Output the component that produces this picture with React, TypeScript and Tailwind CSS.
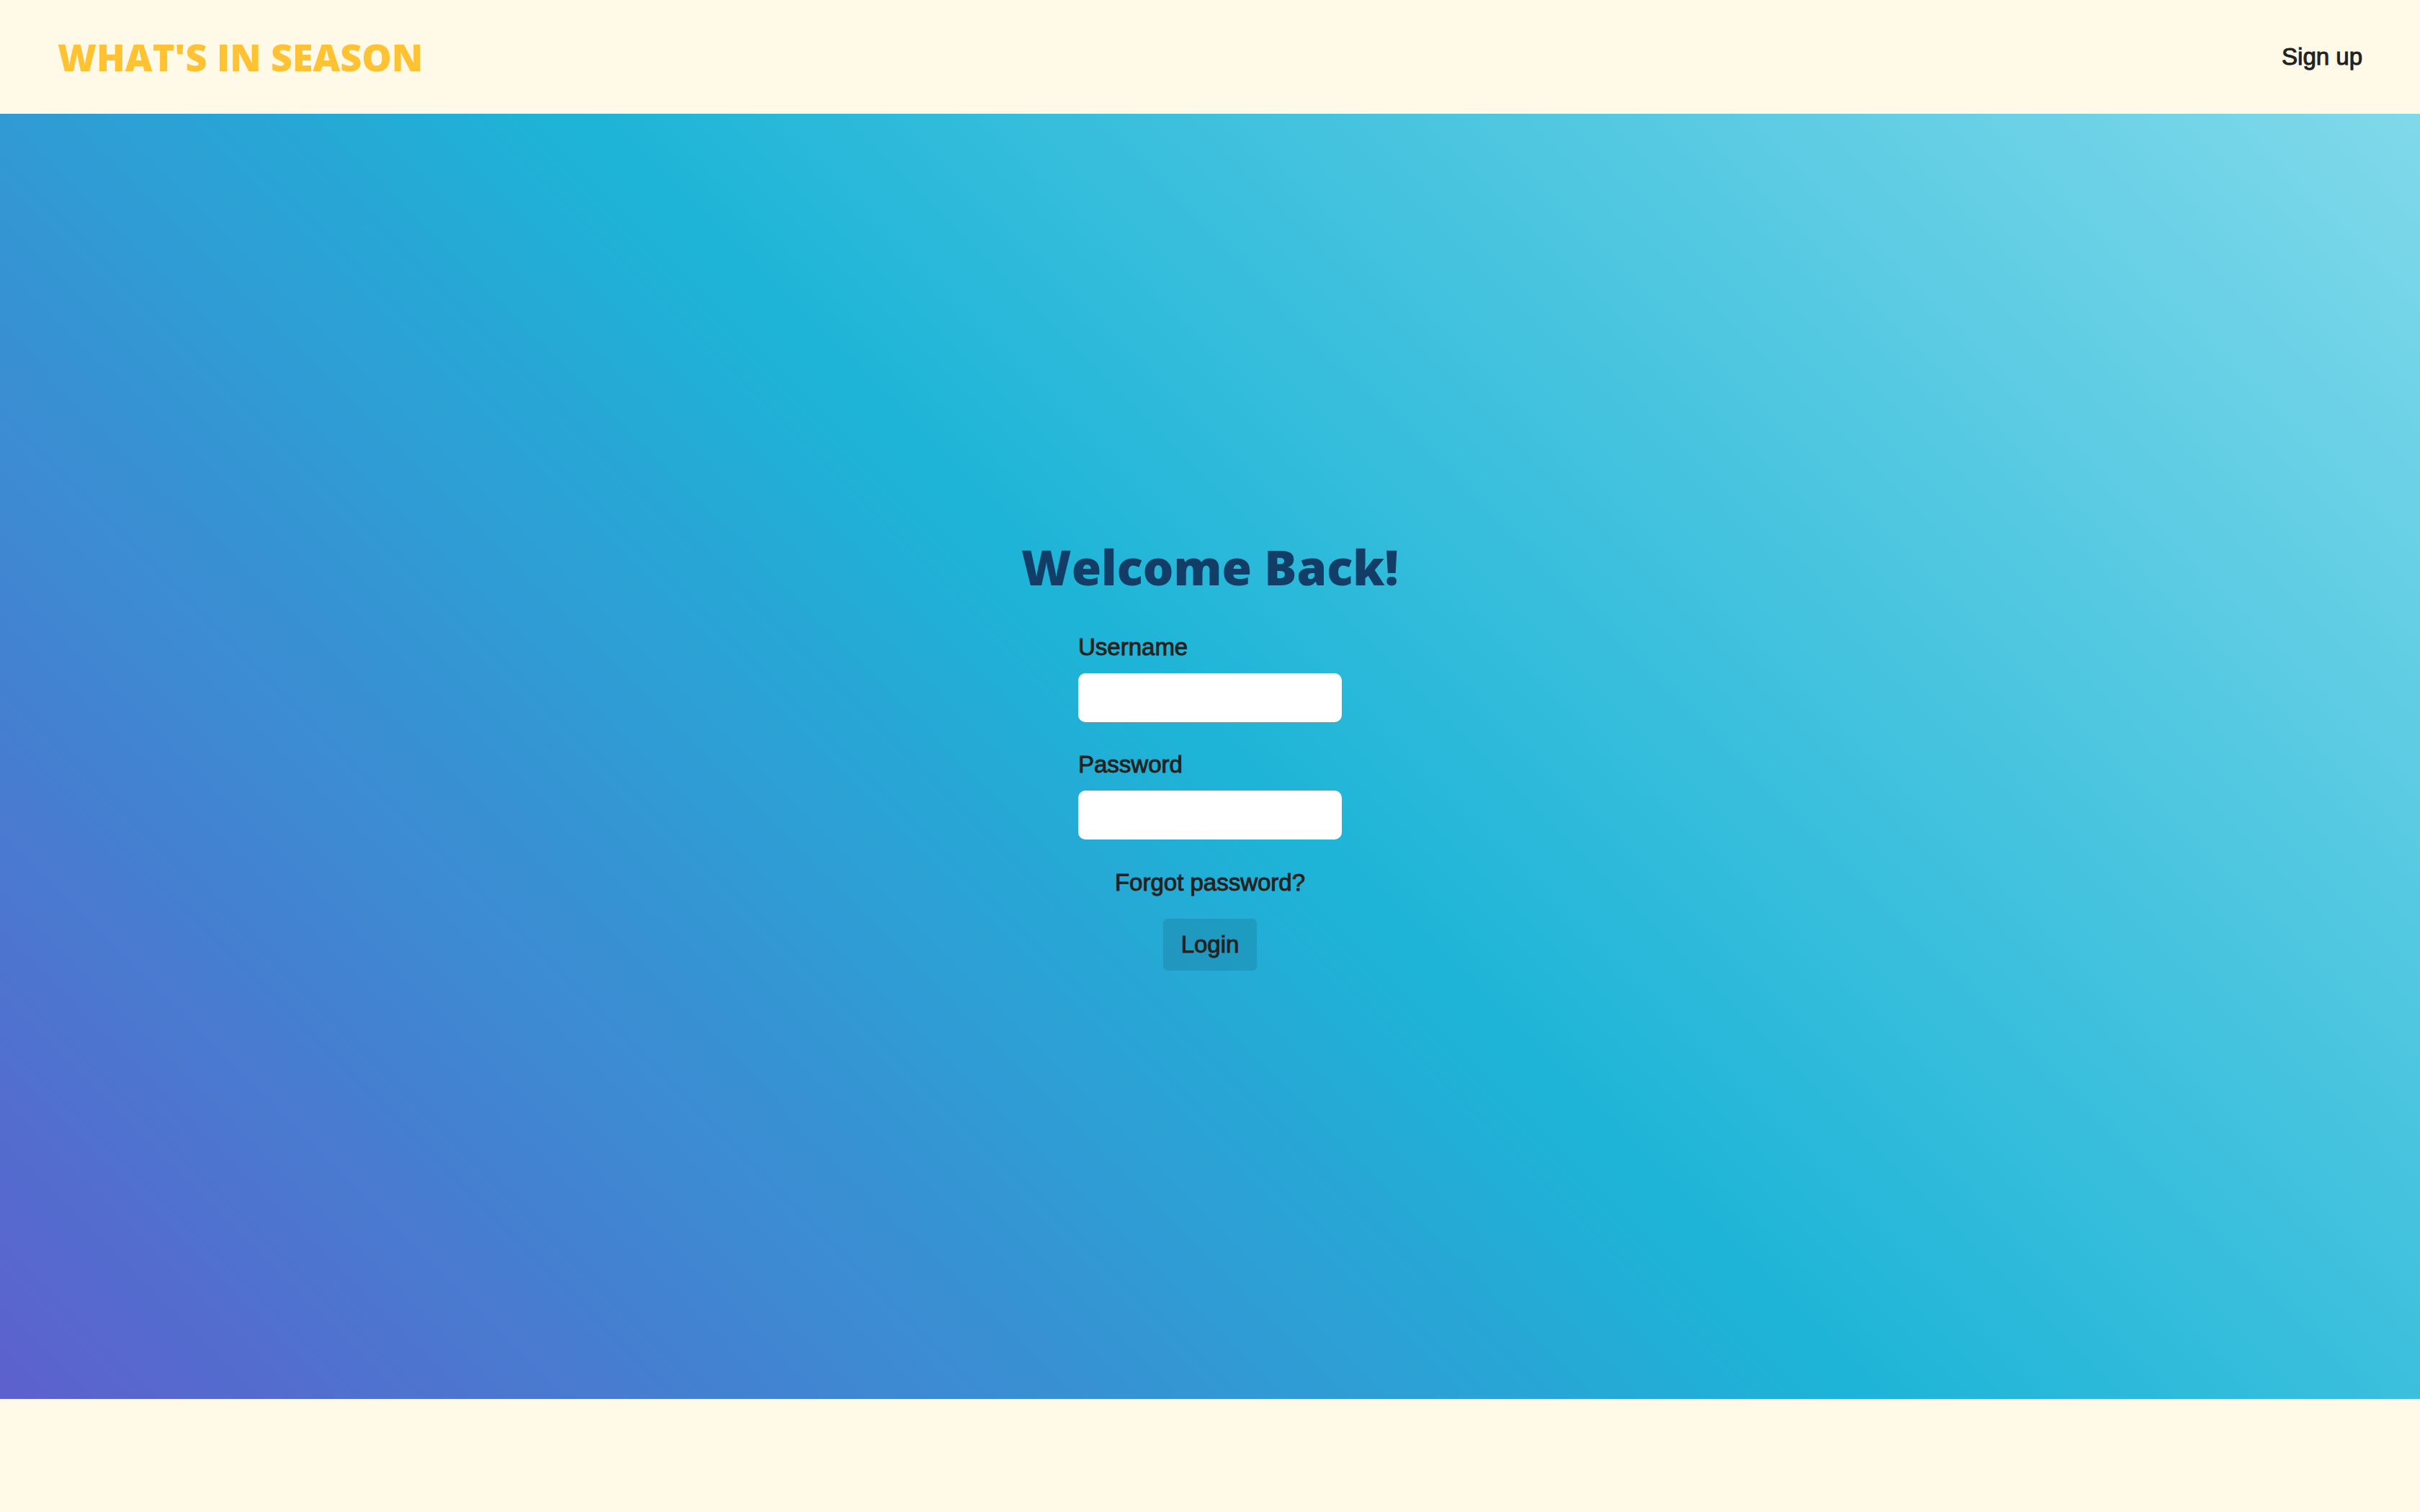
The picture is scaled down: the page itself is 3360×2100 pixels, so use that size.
import { useId } from "react";

const FIELD_TEXT =
  "text-[33px] leading-10 text-[#222222] [-webkit-text-stroke:1px_#222222]";

function Field({ label, type }: { label: string; type: string }) {
  const id = useId();
  return (
    <div className="flex flex-col gap-4">
      <label htmlFor={id} className={FIELD_TEXT}>
        {label}
      </label>
      <input
        id={id}
        type={type}
        className="h-[68px] w-[366px] rounded-[10px] bg-white px-4 text-[32px] outline-none"
      />
    </div>
  );
}

export default function App() {
  return (
    <div className="flex min-h-screen flex-col bg-[#fff9e8] font-['Liberation_Sans',Arial,sans-serif]">
      <header className="flex items-center justify-between px-20 py-[47px]">
        <a
          href="#"
          className="font-['Open_Sans',sans-serif] text-[52px] leading-[64px] font-extrabold text-[#ffc233] uppercase"
        >
          What's in season
        </a>
        <a href="#" className={FIELD_TEXT}>
          Sign up
        </a>
      </header>

      <main className="flex flex-1 flex-col items-center justify-center bg-[linear-gradient(45deg,#5d60cd_0%,#1db4d7_50%,#80d9ea_100%)]">
        <form className="flex flex-col items-center" onSubmit={(e) => e.preventDefault()}>
          <h1 className="font-['Open_Sans',sans-serif] text-[67px] leading-[68px] font-extrabold text-[#123d66]">
            Welcome Back!
          </h1>
          <div className="mt-[58px] flex flex-col gap-[39px]">
            <Field label="Username" type="text" />
            <Field label="Password" type="password" />
          </div>
          <a href="#" className={`${FIELD_TEXT} mt-10`}>
            Forgot password?
          </a>
          <button
            type="submit"
            className={`${FIELD_TEXT} mt-[30px] rounded-md bg-black/10 px-[25px] py-4`}
          >
            Login
          </button>
        </form>
      </main>

      <footer className="h-[157px]" />
    </div>
  );
}
